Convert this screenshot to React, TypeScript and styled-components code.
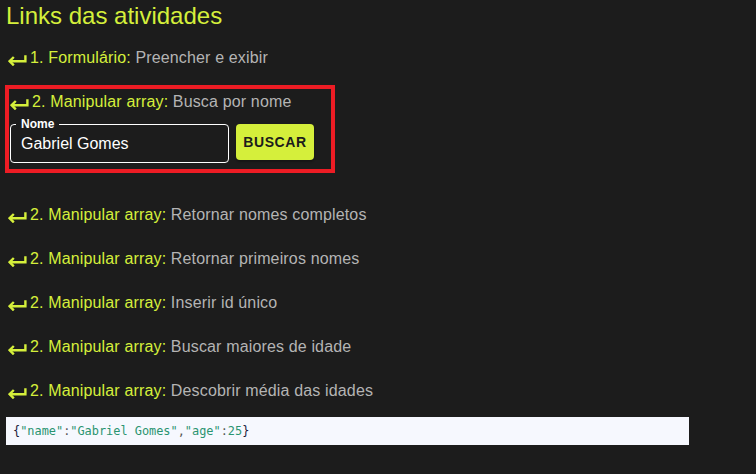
import React from "react";
import styled, { createGlobalStyle } from "styled-components";

const LIME = "#d5ef3b";
const GRAY = "#b4b4b4";

const Global = createGlobalStyle`
  html, body {
    margin: 0;
    padding: 0;
    background: #1c1c1c;
  }
  body {
    font-family: "Liberation Sans", Arial, sans-serif;
  }
`;

const Page = styled.div`
  display: flex;
  flex-direction: column;
  align-items: flex-start;
  padding: 2px 0 0 6px;
  min-height: 472px;
  box-sizing: border-box;
`;

const Title = styled.h1`
  margin: 0 0 6px 0;
  font-size: 24px;
  line-height: 28px;
  font-weight: 400;
  color: ${LIME};
`;

const Row = styled.div<{ $compact?: boolean }>`
  display: flex;
  align-items: center;
  gap: 3px;
  height: ${(p) => (p.$compact ? "24px" : "44px")};
  padding-left: ${(p) => (p.$compact ? "1px" : "2px")};
  font-size: 16px;
  letter-spacing: 0.15px;
  white-space: nowrap;
`;

const ArrowIcon = styled.svg`
  flex: none;
  width: 19px;
  height: 12px;
  margin-top: 3px;
`;

const Text = styled.span`
  color: ${GRAY};
`;

const Label = styled.span`
  color: ${LIME};
`;

const SearchBox = styled.section`
  width: 322px;
  margin: 9px 0 24px 3px;
  padding: 1px 0 6px 0;
  outline: 4px solid #ed1c24;
  box-sizing: border-box;
  display: flex;
  flex-direction: column;
`;

const FormRow = styled.form`
  display: flex;
  align-items: flex-start;
  gap: 7px;
  margin-top: 3px;
  padding-left: 1px;
`;

const Field = styled.fieldset`
  margin: 0;
  width: 219px;
  box-sizing: border-box;
  padding: 0 10px 8px 10px;
  border: 1px solid #ffffff;
  border-radius: 4px;
  min-inline-size: 0;
`;

const Legend = styled.legend`
  margin-left: -5px;
  padding: 0 5px;
  font-size: 12px;
  line-height: 14px;
  font-weight: 700;
  color: #ffffff;
`;

const Input = styled.input`
  display: block;
  width: 100%;
  margin-top: 3px;
  height: 20px;
  padding: 0;
  border: none;
  outline: none;
  background: transparent;
  color: #ffffff;
  font-family: "Liberation Sans", Arial, sans-serif;
  font-size: 16px;
  line-height: 20px;
`;

const Button = styled.button`
  margin-top: 7px;
  width: 78px;
  height: 36px;
  padding: 0;
  border: none;
  border-radius: 4px;
  background: ${LIME};
  color: #1c1c1c;
  font-family: "Liberation Sans", Arial, sans-serif;
  font-size: 14px;
  font-weight: 700;
  letter-spacing: 0.6px;
  box-shadow: 0 2px 2px rgba(0, 0, 0, 0.25);
  cursor: pointer;
`;

const Code = styled.pre`
  margin: 4px 0 0 0;
  width: 683px;
  height: 28px;
  box-sizing: border-box;
  padding: 0 0 0 7px;
  background: #f6f8fe;
  font-family: "DejaVu Sans Mono", "Liberation Mono", monospace;
  font-size: 11.9px;
  line-height: 28px;
  color: #1b1b3a;
`;

const Tok = styled.span<{ $kind: "str" | "punct" | "num" | "brace" }>`
  color: ${(p) =>
    p.$kind === "str" || p.$kind === "num"
      ? "#2a9470"
      : p.$kind === "punct"
      ? "#555"
      : "#1b1b3a"};
`;

const Arrow = () => (
  <ArrowIcon viewBox="0 0 19 12" fill="none" stroke={LIME} strokeWidth="2.4">
    <polyline points="17.4,1.2 17.4,7.2 1.6,7.2" />
    <polyline points="5.8,3 1.6,7.2 5.8,11.4" />
  </ArrowIcon>
);

const rest = [
  "Retornar nomes completos",
  "Retornar primeiros nomes",
  "Inserir id único",
  "Buscar maiores de idade",
  "Descobrir média das idades",
];

export default function App() {
  return (
    <>
      <Global />
      <Page>
        <Title>Links das atividades</Title>
        <Row>
          <Arrow />
          <Text>
            <Label>1. Formulário:</Label> Preencher e exibir
          </Text>
        </Row>
        <SearchBox>
          <Row $compact>
            <Arrow />
            <Text>
              <Label>2. Manipular array:</Label> Busca por nome
            </Text>
          </Row>
          <FormRow onSubmit={(e) => e.preventDefault()}>
            <Field>
              <Legend>Nome</Legend>
              <Input defaultValue="Gabriel Gomes" />
            </Field>
            <Button type="submit">BUSCAR</Button>
          </FormRow>
        </SearchBox>
        {rest.map((d) => (
          <Row key={d}>
            <Arrow />
            <Text>
              <Label>2. Manipular array:</Label> {d}
            </Text>
          </Row>
        ))}
        <Code>
          <Tok $kind="brace">{"{"}</Tok>
          <Tok $kind="str">"name"</Tok>
          <Tok $kind="punct">:</Tok>
          <Tok $kind="str">"Gabriel Gomes"</Tok>
          <Tok $kind="punct">,</Tok>
          <Tok $kind="str">"age"</Tok>
          <Tok $kind="punct">:</Tok>
          <Tok $kind="num">25</Tok>
          <Tok $kind="brace">{"}"}</Tok>
        </Code>
      </Page>
    </>
  );
}
